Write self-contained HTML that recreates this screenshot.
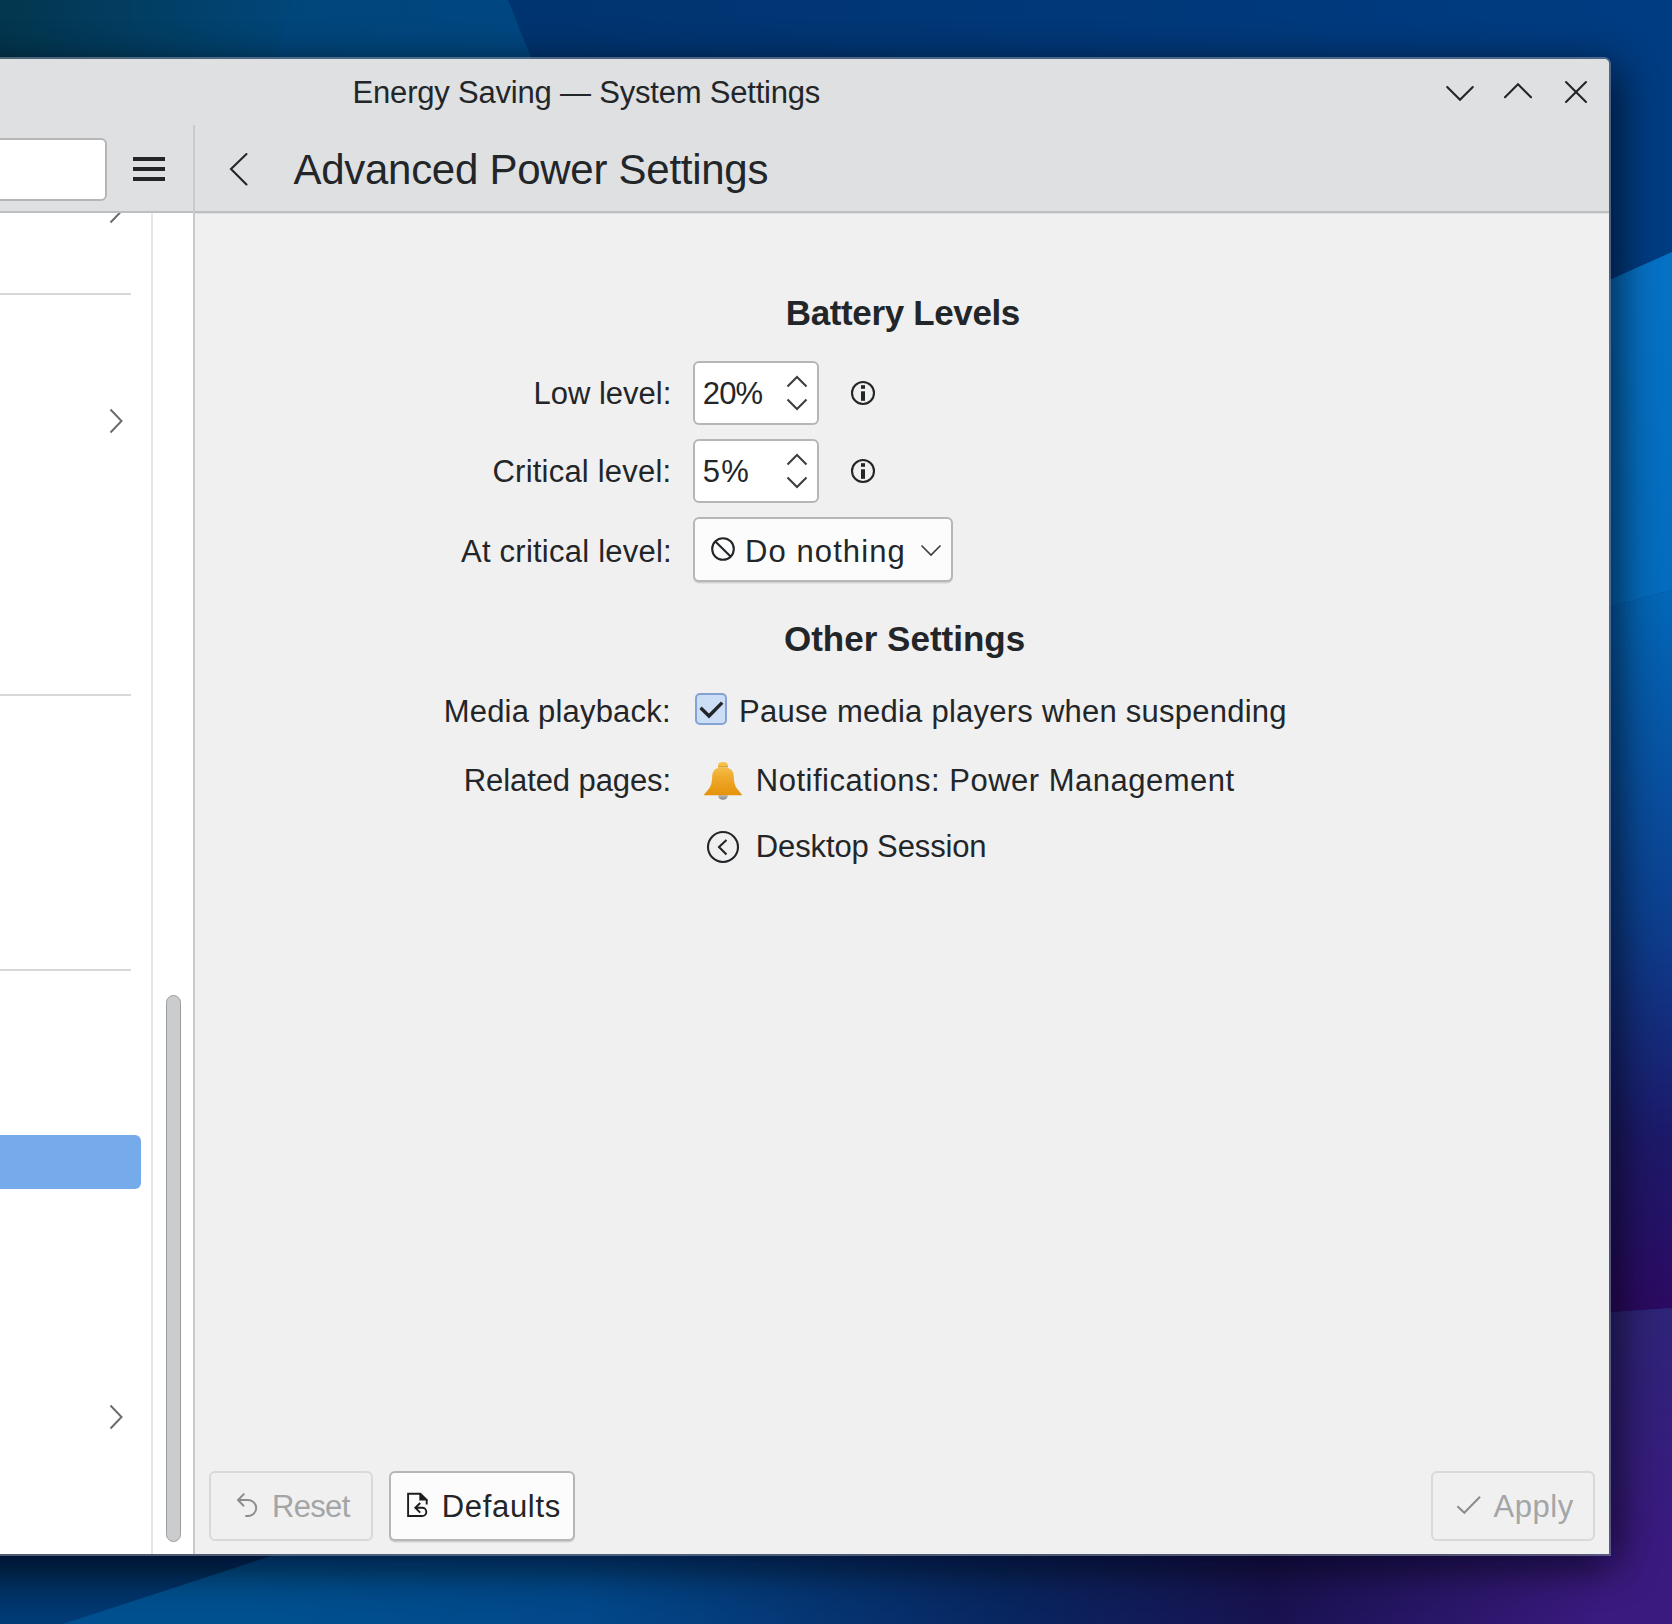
<!DOCTYPE html>
<html><head><meta charset="utf-8">
<style>
html,body{margin:0;padding:0;}
body{width:1672px;height:1624px;overflow:hidden;position:relative;font-family:"Liberation Sans",sans-serif;color:#232629;background:#003070;}
.a{position:absolute;box-sizing:border-box;}
.t{position:absolute;white-space:nowrap;line-height:1;font-family:"Liberation Sans",sans-serif;}
svg{position:absolute;overflow:visible;}
</style></head>
<body>
<svg style="left:0;top:0" width="1672" height="1624" viewBox="0 0 1672 1624">
  <defs>
    <linearGradient id="gTopL" x1="0" y1="0" x2="290" y2="0" gradientUnits="userSpaceOnUse">
      <stop offset="0" stop-color="#03364e"/>
      <stop offset="1" stop-color="#014679"/>
    </linearGradient>
    <linearGradient id="gBand" x1="280" y1="0" x2="530" y2="0" gradientUnits="userSpaceOnUse">
      <stop offset="0" stop-color="#01467b"/>
      <stop offset="1" stop-color="#004781"/>
    </linearGradient>
    <linearGradient id="gTopR" x1="520" y1="0" x2="1672" y2="0" gradientUnits="userSpaceOnUse">
      <stop offset="0" stop-color="#003470"/>
      <stop offset="1" stop-color="#003c82"/>
    </linearGradient>
    <linearGradient id="gBlue" x1="0" y1="260" x2="0" y2="600" gradientUnits="userSpaceOnUse">
      <stop offset="0" stop-color="#0672c6"/>
      <stop offset="1" stop-color="#046cbe"/>
    </linearGradient>
    <linearGradient id="gMid" x1="0" y1="600" x2="0" y2="1310" gradientUnits="userSpaceOnUse">
      <stop offset="0" stop-color="#0366b6"/>
      <stop offset="0.45" stop-color="#0c3f8e"/>
      <stop offset="0.75" stop-color="#1c1a6a"/>
      <stop offset="1" stop-color="#2c0a62"/>
    </linearGradient>
    <linearGradient id="gPurp" x1="0" y1="1310" x2="0" y2="1624" gradientUnits="userSpaceOnUse">
      <stop offset="0" stop-color="#2e2478"/>
      <stop offset="1" stop-color="#3e1682"/>
    </linearGradient>
    <linearGradient id="gBotL" x1="0" y1="1555" x2="0" y2="1624" gradientUnits="userSpaceOnUse">
      <stop offset="0" stop-color="#012a58"/>
      <stop offset="1" stop-color="#013c78"/>
    </linearGradient>
    <linearGradient id="gBotR" x1="0" y1="0" x2="1672" y2="0" gradientUnits="userSpaceOnUse">
      <stop offset="0.15" stop-color="#00508f"/>
      <stop offset="0.35" stop-color="#02488a"/>
      <stop offset="0.6" stop-color="#082660"/>
      <stop offset="0.76" stop-color="#181250"/>
      <stop offset="0.96" stop-color="#3a1a7f"/>
      <stop offset="1" stop-color="#3a1a7f"/>
    </linearGradient>
    <filter id="shadowBlur" x="-0.1" y="-0.1" width="1.2" height="1.2"><feGaussianBlur stdDeviation="22"/></filter>
  </defs>
  <rect x="0" y="0" width="1672" height="1624" fill="url(#gTopR)"/>
  <polygon points="0,0 290,0 272,70 0,70" fill="url(#gTopL)"/>
  <polygon points="290,0 508,0 536,70 272,70" fill="url(#gBand)"/>
  <polygon points="1560,302 1672,252 1672,590 1560,620" fill="url(#gBlue)"/>
  <polygon points="1560,620 1672,590 1672,1308 1560,1316" fill="url(#gMid)"/>
  <polygon points="1560,1316 1672,1308 1672,1560 1560,1560" fill="url(#gPurp)"/>
  <rect x="0" y="1540" width="1672" height="84" fill="url(#gBotR)"/>
  <polygon points="0,1540 320,1540 63,1624 0,1624" fill="url(#gBotL)"/>
  <rect x="-60" y="68" width="1676" height="1498" fill="#000008" opacity="0.75" filter="url(#shadowBlur)"/>
</svg>
<div class="a" style="left:-20px;top:58.8px;width:1629px;height:1495.6px;border-top-right-radius:5px;background:#f0f0f0;box-shadow:0 0 0 2px rgba(140,150,170,0.55);overflow:hidden;"><div class="a" style="left:0;top:0;width:1630px;height:155px;background:#dee0e2;"></div></div>
<div class="a" style="left:0;top:211px;width:1609px;height:2px;background:#bdbfc1;"></div>
<div class="a" style="left:0;top:213px;width:193px;height:1341.4px;background:#ffffff;"></div>
<div class="a" style="left:151px;top:213px;width:2px;height:1341.4px;background:#e6e6e7;"></div>
<div class="a" style="left:193px;top:125px;width:2px;height:1429.4px;background:#c9cacc;"></div>
<div class="t" style="left:352.6px;top:77.0px;font-size:31px;font-weight:400;color:#232629;letter-spacing:-0.203px">Energy Saving — System Settings</div>
<svg style="left:0;top:0" width="1672" height="220" viewBox="0 0 1672 220" fill="none" stroke="#232629" stroke-width="2.1" stroke-linecap="round" stroke-linejoin="miter">
  <polyline points="1447.2,87 1460,99.8 1472.8,87"/>
  <polyline points="1505,97.2 1518,84.2 1531,97.2"/>
  <line x1="1566" y1="82" x2="1586" y2="102"/>
  <line x1="1586" y1="82" x2="1566" y2="102"/>
  <polyline points="246.5,154 231,169 246.5,184.5" stroke-width="2.1"/>
</svg>
<div class="a" style="left:-10px;top:138px;width:117px;height:63px;background:#ffffff;border:2px solid #b5b6b7;border-radius:6px;"></div>
<div class="a" style="left:133px;top:157px;width:32px;height:4px;background:#232629;"></div>
<div class="a" style="left:133px;top:167px;width:32px;height:4px;background:#232629;"></div>
<div class="a" style="left:133px;top:177px;width:32px;height:4px;background:#232629;"></div>
<div class="t" style="left:293.4px;top:148.9px;font-size:42px;font-weight:400;color:#232629;letter-spacing:-0.268px">Advanced Power Settings</div>
<div class="a" style="left:0;top:293px;width:131px;height:2px;background:#d8d8d9;"></div>
<div class="a" style="left:0;top:694px;width:131px;height:2px;background:#d8d8d9;"></div>
<div class="a" style="left:0;top:969px;width:131px;height:2px;background:#d8d8d9;"></div>
<div class="a" style="left:0;top:1135px;width:141px;height:54px;background:#76abeb;border-radius:0 6px 6px 0;"></div>
<svg style="left:0;top:213px;overflow:hidden" width="193" height="1342" viewBox="0 213 193 1342" fill="none" stroke="#6b6c6d" stroke-width="2" >
  <polyline points="110.5,199.5 121.5,211 110.5,222.5"/>
  <polyline points="110.5,409.5 121.5,421 110.5,432.5"/>
  <polyline points="110.5,1405.5 121.5,1417 110.5,1428.5"/>
</svg>
<div class="a" style="left:165.5px;top:995px;width:15px;height:547px;background:#cbcccd;border:1px solid #9c9d9e;border-radius:8px;"></div>
<div class="t" style="left:785.8px;top:295.2px;font-size:35px;font-weight:700;color:#232629;letter-spacing:-0.369px">Battery Levels</div>
<div class="t" style="left:533.4px;top:378.2px;font-size:31px;font-weight:400;color:#232629;letter-spacing:0.011px">Low level:</div>
<div class="a" style="left:693px;top:361px;width:126px;height:64px;background:#ffffff;border:2px solid #b5b6b7;border-radius:6px;"></div>
<div class="t" style="left:702.8px;top:378.0px;font-size:31px;font-weight:400;color:#232629;letter-spacing:-0.9px">20%</div>
<svg style="left:0;top:0" width="1" height="1" fill="none" stroke="#3b3d3f" stroke-width="2">
      <polyline points="787.5,386.5 797,377 806.5,386.5"/>
      <polyline points="787.5,399.5 797,409 806.5,399.5"/>
      <circle cx="863" cy="393" r="11" stroke="#232629" stroke-width="2.1"/>
      <rect x="861" y="385.2" width="4" height="3.6" fill="#232629" stroke="none"/>
      <rect x="861" y="391.3" width="4" height="9.5" fill="#232629" stroke="none"/>
    </svg>
<div class="t" style="left:492.5px;top:455.5px;font-size:31px;font-weight:400;color:#232629;letter-spacing:0.214px">Critical level:</div>
<div class="a" style="left:693px;top:439px;width:126px;height:64px;background:#ffffff;border:2px solid #b5b6b7;border-radius:6px;"></div>
<div class="t" style="left:702.8px;top:456.0px;font-size:31px;font-weight:400;color:#232629;letter-spacing:1.2px">5%</div>
<svg style="left:0;top:0" width="1" height="1" fill="none" stroke="#3b3d3f" stroke-width="2">
      <polyline points="787.5,464.5 797,455 806.5,464.5"/>
      <polyline points="787.5,477.5 797,487 806.5,477.5"/>
      <circle cx="863" cy="471" r="11" stroke="#232629" stroke-width="2.1"/>
      <rect x="861" y="463.2" width="4" height="3.6" fill="#232629" stroke="none"/>
      <rect x="861" y="469.3" width="4" height="9.5" fill="#232629" stroke="none"/>
    </svg>
<div class="t" style="left:461.0px;top:536.1px;font-size:31px;font-weight:400;color:#232629;letter-spacing:0.235px">At critical level:</div>
<div class="a" style="left:693px;top:517px;width:260px;height:65px;background:#fcfcfc;border:2px solid #b5b6b7;border-radius:6px;box-shadow:0 1.5px 0 #d2d3d4;"></div>
<svg style="left:0;top:0" width="1" height="1" fill="none" stroke="#232629" stroke-width="2.1">
  <circle cx="723" cy="549" r="10.8"/>
  <line x1="715.4" y1="541.4" x2="730.6" y2="556.6"/>
  <polyline points="921.5,545.5 931,555 940.5,545.5" stroke="#3b3d3f" stroke-width="1.6"/>
</svg>
<div class="t" style="left:745.0px;top:536.1px;font-size:31px;font-weight:400;color:#232629;letter-spacing:1.089px">Do nothing</div>
<div class="t" style="left:783.9px;top:621.0px;font-size:35px;font-weight:700;color:#232629;letter-spacing:0.015px">Other Settings</div>
<div class="t" style="left:443.7px;top:695.6px;font-size:31px;font-weight:400;color:#232629;letter-spacing:0.207px">Media playback:</div>
<div class="a" style="left:695px;top:693px;width:32px;height:32px;background:#cbdef5;border:2px solid #84a3d3;border-radius:5px;"></div>
<svg style="left:0;top:0" width="1" height="1" fill="none" stroke="#232629" stroke-width="3.4" stroke-linecap="square">
  <polyline points="701.8,709 709,716 721,703.8"/>
</svg>
<div class="t" style="left:739.0px;top:695.6px;font-size:31px;font-weight:400;color:#232629;letter-spacing:0.241px">Pause media players when suspending</div>
<div class="t" style="left:463.8px;top:764.7px;font-size:31px;font-weight:400;color:#232629;letter-spacing:-0.092px">Related pages:</div>
<svg style="left:0;top:0" width="1" height="1">
  <defs><linearGradient id="bell" x1="0" y1="762" x2="0" y2="795" gradientUnits="userSpaceOnUse">
    <stop offset="0" stop-color="#f8c85a"/><stop offset="0.45" stop-color="#efaa2c"/><stop offset="1" stop-color="#e5930a"/></linearGradient>
    <linearGradient id="clap" x1="0" y1="794" x2="0" y2="800" gradientUnits="userSpaceOnUse">
    <stop offset="0" stop-color="#c4c7ca"/><stop offset="1" stop-color="#7d8287"/></linearGradient></defs>
  <ellipse cx="723" cy="796" rx="4.7" ry="3.8" fill="url(#clap)"/>
  <path d="M718,767.5 L718,765.5 Q718,762 723,762 Q728,762 728,765.5 L728,767.5 Z" fill="#f6bf48"/>
  <line x1="718" y1="766.8" x2="728" y2="766.8" stroke="#c98a1c" stroke-width="0.8"/>
  <path d="M712.2,777 C712.4,770.5 715,767.5 723,767.5 C731,767.5 733.6,770.5 733.8,777 C734,782 734.8,785.5 736.6,788 C738.6,790.8 740.8,793 742.3,795.2 L703.7,795.2 C705.2,793 707.4,790.8 709.4,788 C711.2,785.5 712,782 712.2,777 Z" fill="url(#bell)"/>
</svg>
<div class="t" style="left:755.8px;top:764.7px;font-size:31px;font-weight:400;color:#232629;letter-spacing:0.493px">Notifications: Power Management</div>
<svg style="left:0;top:0" width="1" height="1" fill="none" stroke="#232629" stroke-width="2.1">
  <circle cx="723" cy="847" r="15"/>
  <polyline points="726.5,840 719,847 726.5,854.5"/>
</svg>
<div class="t" style="left:755.8px;top:830.6px;font-size:31px;font-weight:400;color:#232629;letter-spacing:-0.129px">Desktop Session</div>
<div class="a" style="left:209px;top:1471px;width:164px;height:70px;background:#f0f0f0;border:2px solid #d8d9da;border-radius:6px;"></div>
<div class="a" style="left:389px;top:1471px;width:186px;height:70px;background:#fcfcfc;border:2px solid #b5b6b7;border-radius:6px;box-shadow:0 1.5px 0 #d0d1d2;"></div>
<div class="a" style="left:1431px;top:1471px;width:164px;height:70px;background:#f0f0f0;border:2px solid #d8d9da;border-radius:6px;"></div>
<div class="t" style="left:272.0px;top:1490.5px;font-size:31px;font-weight:400;color:#a3a5a7;letter-spacing:-0.675px">Reset</div>
<div class="t" style="left:441.8px;top:1490.5px;font-size:31px;font-weight:400;color:#232629;letter-spacing:0.671px">Defaults</div>
<div class="t" style="left:1493.5px;top:1490.5px;font-size:31px;font-weight:400;color:#a3a5a7;letter-spacing:0.525px">Apply</div>
<svg style="left:0;top:0" width="1" height="1" fill="none" stroke-width="2" stroke-linecap="butt">
  <path d="M244.3,1493.6 L238,1500 L244,1506.2 M238,1500 L248.2,1500 A8,8 0 0 1 248.2,1516 L245.3,1516" stroke="#8a8c8e"/>
  <path d="M420.5,1493.8 L408.1,1493.8 L408.1,1516 L422.2,1516 A4.1,4.1 0 0 0 422.2,1507.8 L415.3,1507.8 M420.2,1503 L415.3,1507.8 L420.2,1512.6 M426.7,1499.5 L426.7,1504.5" stroke="#1b1d1f" stroke-width="1.9" stroke-linecap="butt"/>
  <path d="M419.3,1492.9 L421,1492.9 L427.6,1499.5 L427.6,1500.6 L419.3,1500.6 Z" fill="#1b1d1f" stroke="none"/>
  <polyline points="1457.4,1506.2 1464.3,1512.8 1480,1496.8" stroke="#8a8c8e"/>
</svg>
</body></html>
